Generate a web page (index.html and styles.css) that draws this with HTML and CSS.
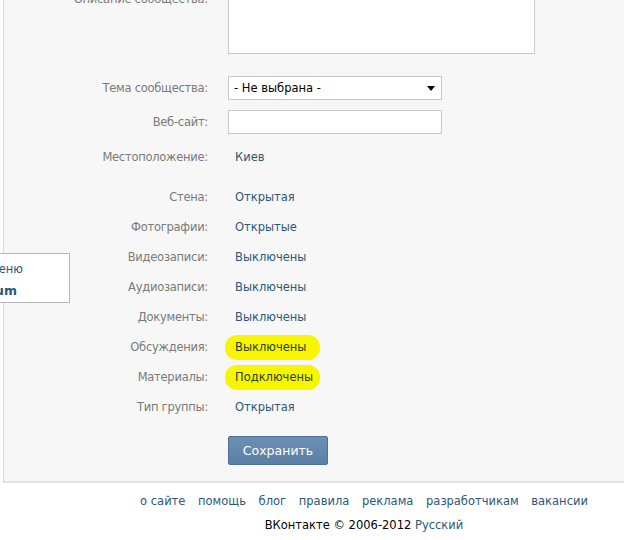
FILE: index.html
```html
<!DOCTYPE html>
<html lang="ru">
<head>
    <meta charset="UTF-8">
    <title>Управление сообществом</title>
    <link rel="stylesheet" href="styles.css">
</head>
<body>
    <div class="page">
        <div class="panel">
            <div class="form">
                <div class="row row-area">
                    <div class="label">Описание сообщества:</div>
                    <div class="field"><div class="textarea"></div></div>
                </div>
                <div class="row row-select">
                    <div class="label">Тема сообщества:</div>
                    <div class="field">
                        <div class="select">
                            <span>- Не выбрана -</span>
                            <svg class="select-arrow" viewBox="0 0 8 5"><path d="M0 0h8L4 5z" fill="#000"/></svg>
                        </div>
                    </div>
                </div>
                <div class="row row-input">
                    <div class="label">Веб-сайт:</div>
                    <div class="field"><div class="input"></div></div>
                </div>
                <div class="row">
                    <div class="label">Местоположение:</div>
                    <div class="value">Киев</div>
                </div>

                <div class="row row-first">
                    <div class="label">Стена:</div>
                    <div class="value">Открытая</div>
                </div>
                <div class="row">
                    <div class="label">Фотографии:</div>
                    <div class="value">Открытые</div>
                </div>
                <div class="row">
                    <div class="label">Видеозаписи:</div>
                    <div class="value">Выключены</div>
                </div>
                <div class="row">
                    <div class="label">Аудиозаписи:</div>
                    <div class="value">Выключены</div>
                </div>
                <div class="row">
                    <div class="label">Документы:</div>
                    <div class="value">Выключены</div>
                </div>
                <div class="row">
                    <div class="label">Обсуждения:</div>
                    <div class="value marked-row"><span class="marked">Выключены</span></div>
                </div>
                <div class="row">
                    <div class="label">Материалы:</div>
                    <div class="value marked-row"><span class="marked">Подключены</span></div>
                </div>
                <div class="row">
                    <div class="label">Тип группы:</div>
                    <div class="value">Открытая</div>
                </div>
                <div class="row row-button">
                    <div class="label"></div>
                    <div class="field"><button class="button">Сохранить</button></div>
                </div>
            </div>

            <div class="menu">
                <div class="menu-item cut">Добавить в меню</div>
                <div class="menu-item bold">Premium</div>
            </div>
        </div>

        <div class="footer">
            <div class="footer-links">
                <a href="#">о сайте</a>
                <a href="#">помощь</a>
                <a href="#">блог</a>
                <a href="#">правила</a>
                <a href="#">реклама</a>
                <a href="#">разработчикам</a>
                <a href="#">вакансии</a>
            </div>
            <div class="copy">ВКонтакте © 2006-2012 <a href="#">Русский</a></div>
        </div>
    </div>
</body>
</html>
```

FILE: styles.css
```css
* {
    margin: 0;
    padding: 0;
    box-sizing: border-box;
}

body {
    font-family: "DejaVu Sans", Tahoma, sans-serif;
    font-size: 11.5px;
    color: #000;
    background: #fff;
    overflow: hidden;
}

a {
    color: #2b587a;
    text-decoration: none;
}

.page {
    width: 624px;
}

.panel {
    position: relative;
    margin-top: -40px;
    margin-left: 3px;
    height: 523px;
    background: #f7f7f7;
    border-left: 1px solid #dadada;
    border-bottom: 2px solid #e3e3e3;
}

.form {
    padding-top: 25px;
}

.row {
    display: grid;
    grid-template-columns: 204px 1fr;
    column-gap: 20px;
    height: 30px;
    align-items: center;
}

.label {
    text-align: right;
    color: #7a7a7a;
    letter-spacing: -0.25px;
}

.value {
    padding-left: 7px;
    color: #2b587a;
}

.row-area {
    height: 69px;
    align-items: start;
    margin-bottom: 22px;
}

.row-area .label {
    padding-top: 7px;
}

.textarea {
    width: 307px;
    height: 69px;
    background: #fff;
    border: 1px solid #c9c9c9;
}

.row-select,
.row-input {
    height: 24px;
}

.row-select {
    margin-bottom: 10px;
}

.row-input {
    margin-bottom: 8px;
}

.select,
.input {
    width: 214px;
    height: 24px;
    background: #fff;
    border: 1px solid #c9c9c9;
}

.select {
    display: flex;
    align-items: center;
    justify-content: space-between;
    padding: 0 6px 0 5px;
    color: #000;
}

.select-arrow {
    width: 8px;
    height: 5px;
}

.row-first {
    margin-top: 10px;
}

.marked-row {
    position: relative;
    z-index: 0;
}

.marked {
    position: relative;
    color: #2e3d14;
}

.marked::before {
    content: "";
    position: absolute;
    left: -10px;
    width: 95px;
    top: -5px;
    bottom: -6px;
    background: #f7f500;
    border-radius: 12px;
    z-index: -1;
}

.row-button {
    margin-top: 13px;
}

.button {
    width: 100px;
    height: 29px;
    font-family: inherit;
    font-size: 12.5px;
    color: #fff;
    background: linear-gradient(#6d8fb3, #5b7fa5);
    border: 1px solid #4e7096;
    border-radius: 2px;
}

.menu {
    position: absolute;
    left: -70px;
    top: 293px;
    width: 136px;
    height: 50px;
    background: #fff;
    border: 1px solid #b5b5b5;
    padding-top: 6px;
    overflow: hidden;
}

.menu-item {
    height: 22px;
    line-height: 18px;
    color: #2b587a;
    white-space: nowrap;
}

.menu-item.cut {
    margin-left: -17px;
}

.menu-item.bold {
    font-weight: bold;
    padding-left: 19px;
    font-size: 12.5px;
}

.footer {
    padding-left: 104px;
    text-align: center;
}

.footer-links {
    padding-top: 11px;
    height: 30px;
}

.footer-links a {
    margin: 0 4.5px;
}

.copy {
    padding-top: 5px;
}
```
